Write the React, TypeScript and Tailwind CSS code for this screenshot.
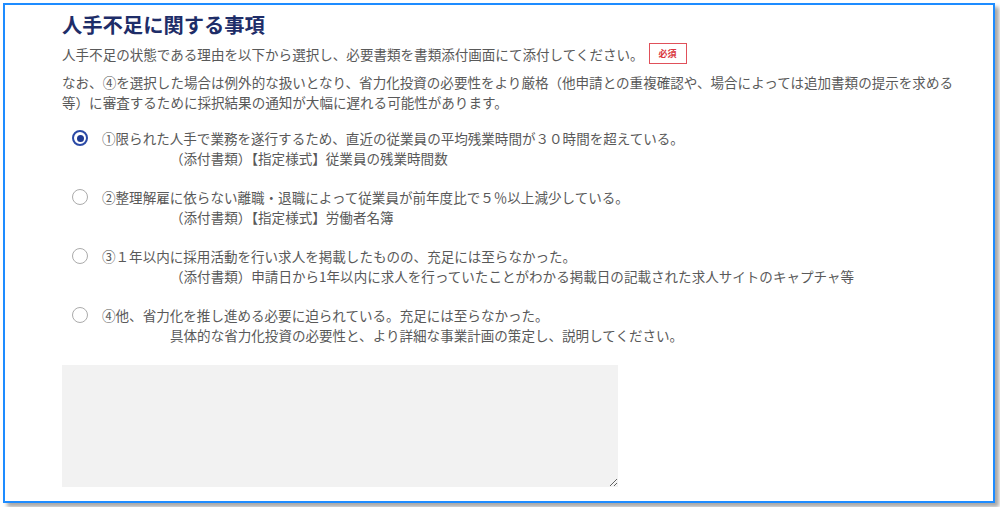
import React, { useState } from "react";

const options = [
  {
    main: "①限られた人手で業務を遂行するため、直近の従業員の平均残業時間が３０時間を超えている。",
    sub: "（添付書類）【指定様式】従業員の残業時間数",
  },
  {
    main: "②整理解雇に依らない離職・退職によって従業員が前年度比で５％以上減少している。",
    sub: "（添付書類）【指定様式】労働者名簿",
  },
  {
    main: "③１年以内に採用活動を行い求人を掲載したものの、充足には至らなかった。",
    sub: "（添付書類）申請日から1年以内に求人を行っていたことがわかる掲載日の記載された求人サイトのキャプチャ等",
  },
  {
    main: "④他、省力化を推し進める必要に迫られている。充足には至らなかった。",
    sub: "具体的な省力化投資の必要性と、より詳細な事業計画の策定し、説明してください。",
  },
];

const Radio = ({ checked }: { checked: boolean }) => (
  <span
    className={
      checked
        ? "flex h-4 w-4 shrink-0 items-center justify-center rounded-full border-2 border-[#2b4aa6] bg-white"
        : "flex h-4 w-4 shrink-0 items-center justify-center rounded-full border-[1.5px] border-[#ababab] bg-white"
    }
  >
    {checked && <span className="h-[7px] w-[7px] rounded-full bg-[#1f3a93]" />}
  </span>
);

const App = () => {
  const [selected, setSelected] = useState(0);

  return (
    <div className="h-[507px] w-[1000px] overflow-hidden bg-white pl-[3px] pt-[3px] font-['Noto_Sans_CJK_JP','Noto_Sans',sans-serif]">
      <div className="h-[500px] w-[992px] border-2 border-[#1e8cff] bg-white pl-[57px] pt-[5px] shadow-[4px_4px_4px_rgba(0,0,0,0.35)]">
        <h2 className="text-[20.3px] font-bold leading-[28px] text-[#1e2d68]">人手不足に関する事項</h2>

        <div className="mt-[5px] flex items-center text-[13.55px] leading-[20px] text-[#595959]">
          <span>人手不足の状態である理由を以下から選択し、必要書類を書類添付画面にて添付してください。</span>
          <span className="ml-[5px] flex h-[21px] w-[38px] items-center justify-center border border-[#e0505a] text-[9px] font-bold text-[#d9363e]">
            必須
          </span>
        </div>

        <p className="mt-[8px] w-[910px] text-[13.55px] leading-[20px] text-[#595959]">
          なお、④を選択した場合は例外的な扱いとなり、省力化投資の必要性をより厳格（他申請との重複確認や、場合によっては追加書類の提示を求める等）に審査するために採択結果の通知が大幅に遅れる可能性があります。
        </p>

        <div className="mt-[16px] flex flex-col gap-[19px]">
          {options.map((o, i) => (
            <label
              key={i}
              className="flex cursor-pointer flex-col text-[13.55px] leading-[20px] text-[#595959]"
              onClick={() => setSelected(i)}
            >
              <div className="flex items-center">
                <span className="ml-[10px] mr-[14px]">
                  <Radio checked={selected === i} />
                </span>
                <span>{o.main}</span>
              </div>
              <div className="pl-[108px]">{o.sub}</div>
            </label>
          ))}
        </div>

        <textarea className="mt-[20px] block h-[122px] w-[556px] resize border-0 bg-[#f2f2f2] outline-none" />
      </div>
    </div>
  );
};

export default App;
